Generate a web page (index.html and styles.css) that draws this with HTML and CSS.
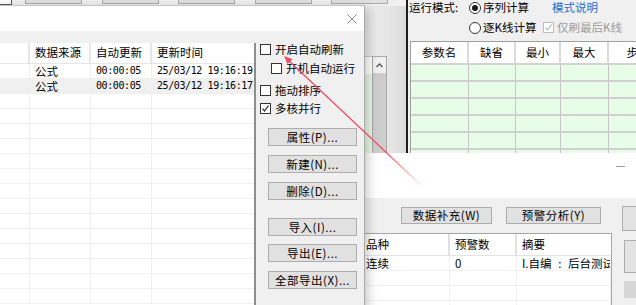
FILE: index.html
```html
<!DOCTYPE html>
<html lang="zh-CN">

<head>
    <meta charset="UTF-8">
    <meta name="viewport" content="width=device-width, initial-scale=1.0">
    <title>公式管理</title>
    <link rel="stylesheet" href="styles.css">
</head>

<body>
    <div class="desktop">

        <!-- main window toolbar, almost hidden behind the dialog -->
        <div class="win toolbar-win">
            <div class="tb-box"></div>
            <button class="tb-btn"></button>
            <button class="tb-btn"></button>
            <button class="tb-btn"></button>
            <button class="tb-btn"></button>
            <button class="tb-btn"></button>
        </div>

        <!-- splitter strip with list + scrollbar -->
        <div class="win side-win">
            <div class="side-grid"></div>
            <div class="vscroll">
                <div class="vscroll-up">
                    <svg width="7" height="5" viewBox="0 0 7 5"><polyline points="0.5,4 3.5,1 6.5,4" fill="none" stroke="#555" stroke-width="1.3"/></svg>
                </div>
            </div>
        </div>

        <!-- run mode window -->
        <div class="win run-win">
            <div class="run-row">
                <span class="run-label">运行模式:</span>
                <label class="radio-opt"><span class="radio on"></span>序列计算</label>
                <a class="link">模式说明</a>
            </div>
            <div class="run-row run-row2">
                <label class="radio-opt"><span class="radio"></span>逐K线计算</label>
                <label class="check-opt disabled">
                    <span class="check"><svg viewBox="0 0 9 9"><polyline points="1.5,4.5 3.5,7 7.5,1.5"/></svg></span>仅刷最后K线
                </label>
            </div>
            <div class="param-table">
                <div class="pt-head"><span>参数名</span><span>缺省</span><span>最小</span><span>最大</span><span>步长</span></div>
                <div class="pt-row"><span></span><span></span><span></span><span></span><span></span></div>
                <div class="pt-row"><span></span><span></span><span></span><span></span><span></span></div>
                <div class="pt-row"><span></span><span></span><span></span><span></span><span></span></div>
                <div class="pt-row"><span></span><span></span><span></span><span></span><span></span></div>
                <div class="pt-row"><span></span><span></span><span></span><span></span><span></span></div>
                <div class="pt-row"><span></span><span></span><span></span><span></span><span></span></div>
            </div>
        </div>

        <!-- warning window -->
        <div class="win warn-win">
            <div class="warn-title"><span class="min-btn"></span></div>
            <div class="warn-body">
                <div class="warn-main">
                    <div class="warn-tools">
                        <button class="btn btn-fill">数据补充(W)</button>
                        <button class="btn btn-warn">预警分析(Y)</button>
                    </div>
                    <div class="warn-table">
                        <div class="wt-head"><span></span><span>品种</span><span>预警数</span><span>摘要</span></div>
                        <div class="wt-row"><span></span><span>连续</span><span>0</span><span class="summary">I.自编 : 后台测试</span></div>
                        <div class="wt-row"><span></span><span></span><span></span><span></span></div>
                        <div class="wt-row"><span></span><span></span><span></span><span></span></div>
                        <div class="wt-row"><span></span><span></span><span></span><span></span></div>
                    </div>
                </div>
                <div class="warn-side">
                    <div class="ws-btn ws-1"></div>
                    <div class="ws-btn ws-2"></div>
                    <div class="ws-btn ws-3"></div>
                </div>
            </div>
        </div>

        <!-- formula dialog -->
        <div class="win dialog">
            <div class="dlg-title">
                <svg class="close" width="10" height="10" viewBox="0 0 10 10"><path d="M0.5 0.5L9.5 9.5M9.5 0.5L0.5 9.5" stroke="#8a8a8a" stroke-width="1"/></svg>
            </div>
            <div class="dlg-body">
                <div class="listview">
                    <div class="lv-row lv-head"><span></span><span>数据来源</span><span>自动更新</span><span>更新时间</span></div>
                    <div class="lv-row"><span></span><span>公式</span><span class="num">00:00:05</span><span class="num">25/03/12 19:16:19</span></div>
                    <div class="lv-row selected"><span></span><span>公式</span><span class="num">00:00:05</span><span class="num">25/03/12 19:16:17</span></div>
                    <div class="lv-row"><span></span><span></span><span></span><span></span></div>
                    <div class="lv-row"><span></span><span></span><span></span><span></span></div>
                    <div class="lv-row"><span></span><span></span><span></span><span></span></div>
                    <div class="lv-row"><span></span><span></span><span></span><span></span></div>
                    <div class="lv-row"><span></span><span></span><span></span><span></span></div>
                    <div class="lv-row"><span></span><span></span><span></span><span></span></div>
                    <div class="lv-row"><span></span><span></span><span></span><span></span></div>
                    <div class="lv-row"><span></span><span></span><span></span><span></span></div>
                    <div class="lv-row"><span></span><span></span><span></span><span></span></div>
                    <div class="lv-row"><span></span><span></span><span></span><span></span></div>
                    <div class="lv-row"><span></span><span></span><span></span><span></span></div>
                    <div class="lv-row"><span></span><span></span><span></span><span></span></div>
                    <div class="lv-row"><span></span><span></span><span></span><span></span></div>
                    <div class="lv-row"><span></span><span></span><span></span><span></span></div>
                </div>

                <div class="dlg-side">
                    <label class="cb-row"><span class="check"></span>开启自动刷新</label>
                    <label class="cb-row cb-sub"><span class="check"></span>开机自动运行</label>
                    <label class="cb-row cb-sort"><span class="check"></span>拖动排序</label>
                    <label class="cb-row cb-multi">
                        <span class="check"><svg viewBox="0 0 9 9"><polyline points="1.5,4.5 3.5,7 7.5,1.5"/></svg></span>多核并行
                    </label>
                    <button class="btn dlg-btn first">属性(P)...</button>
                    <button class="btn dlg-btn">新建(N)...</button>
                    <button class="btn dlg-btn">删除(D)...</button>
                    <button class="btn dlg-btn group">导入(I)...</button>
                    <button class="btn dlg-btn tight">导出(E)...</button>
                    <button class="btn dlg-btn">全部导出(X)...</button>
                </div>
            </div>
        </div>

        <!-- red annotation arrow -->
        <svg class="arrow" width="636" height="305" viewBox="0 0 636 305">
            <defs>
                <linearGradient id="fade" gradientUnits="userSpaceOnUse" x1="287" y1="59" x2="424" y2="188">
                    <stop offset="0" stop-color="#ef4a62" stop-opacity="1"/>
                    <stop offset="0.72" stop-color="#ef4a62" stop-opacity="0.95"/>
                    <stop offset="1" stop-color="#ef4a62" stop-opacity="0"/>
                </linearGradient>
            </defs>
            <line x1="288" y1="60" x2="424" y2="188" stroke="url(#fade)" stroke-width="1.4"/>
            <polygon points="284,56 287.5,64 292.5,59.3" fill="#ef4a62"/>
        </svg>
    </div>
</body>

</html>
```

FILE: styles.css
```css
body {
    margin: 0;
    font-family: "Noto Sans CJK SC", "Noto Sans", sans-serif;
    font-size: 11.5px;
    color: #000;
}

.desktop {
    position: relative;
    width: 636px;
    height: 305px;
    overflow: hidden;
    background: #f0f0f0;
}

.win {
    position: absolute;
    box-sizing: border-box;
}

.btn {
    font: inherit;
    color: #000;
    background: #e1e1e1;
    border: 1px solid #adadad;
    padding: 0;
    box-sizing: border-box;
}

/* toolbar */
.toolbar-win {
    left: 0;
    top: -16px;
    width: 406px;
    height: 22px;
    display: flex;
    align-items: flex-end;
    gap: 19.5px;
    padding-bottom: 2px;
    background: #f0f0f0;
}

.tb-box {
    width: 12px;
    height: 17px;
    margin-bottom: -1px;
    margin-right: -6.5px;
    background: #fff;
    border-right: 1px solid #5a5a5a;
    border-bottom: 1px solid #5a5a5a;
    box-sizing: border-box;
}

.tb-btn {
    width: 57px;
    height: 20px;
    background: #e1e1e1;
    border: 1px solid #adadad;
    padding: 0;
}

/* side strip */
.side-win {
    left: 340px;
    top: 6px;
    width: 66px;
    height: 147px;
    padding: 50px 19px 0 0;
    display: flex;
    background: linear-gradient(to right, #ededed, #e6e6e6 75%, #dadada);
}

.side-grid {
    flex: 1;
    background: linear-gradient(#fff 0 17px, #e7f7e7 17px);
    border-top: 1px solid #c9c9c9;
}

.vscroll {
    width: 15px;
    background: #cdcdcd;
    border: 1px solid #a9a9a9;
    border-bottom: none;
    box-sizing: border-box;
}

.vscroll-up {
    height: 16px;
    background: #f0f0f0;
    display: flex;
    align-items: center;
    justify-content: center;
}

/* run mode window */
.run-win {
    left: 406px;
    top: 0;
    width: 240px;
    height: 153px;
    padding: 1px 0 0 1px;
    border-left: 2px solid #1c1c1c;
    background: #f0f0f0;
}

.run-row {
    display: flex;
    align-items: center;
    height: 13px;
    line-height: 13px;
}

.run-row2 {
    margin-top: 7px;
    padding-left: 60px;
}

.run-label {
    width: 60px;
}

.radio-opt {
    display: flex;
    align-items: center;
    width: 74px;
}

.radio {
    width: 12px;
    height: 12px;
    margin-right: 2px;
    border: 1px solid #333;
    border-radius: 50%;
    background: #fff;
    box-sizing: border-box;
    display: flex;
    align-items: center;
    justify-content: center;
}

.radio.on::after {
    content: "";
    width: 6px;
    height: 6px;
    border-radius: 50%;
    background: #1a1a1a;
}

.link {
    margin-left: 9px;
    color: #1c6fcf;
}

.check-opt {
    display: flex;
    align-items: center;
}

.check {
    width: 11px;
    height: 11px;
    border: 1px solid #333;
    background: #fff;
    box-sizing: border-box;
    margin-right: 3px;
    display: flex;
}

.check svg {
    width: 9px;
    height: 9px;
    fill: none;
    stroke: #222;
    stroke-width: 1.2;
}

.check-opt.disabled {
    color: #9c9c9c;
}

.check-opt.disabled .check {
    border-color: #bcbcbc;
}

.check-opt.disabled .check svg {
    stroke: #b4b4b4;
}

.param-table {
    margin: 7px 0 0 1px;
    border-top: 1px solid #a0a0a0;
    border-left: 1px solid #a0a0a0;
}

.pt-head,
.pt-row {
    display: grid;
    grid-template-columns: 58px 47px 45px 48px 60px;
}

.pt-head span {
    height: 23px;
    line-height: 21px;
    text-align: center;
    background: #fff;
    border-right: 2px solid #dadada;
    border-bottom: 2px solid #d2d2d2;
    box-sizing: border-box;
}

.pt-row span {
    height: 17px;
    background: #e8fde8;
    border-right: 1px solid #c6c6c6;
    border-bottom: 2px solid #d0d0d0;
    box-sizing: border-box;
}

/* warning window */
.warn-win {
    left: 330px;
    top: 153px;
    width: 320px;
    height: 160px;
    background: #f0f0f0;
}

.warn-title {
    height: 45px;
    background: #fff;
    display: flex;
    justify-content: flex-end;
    padding: 13px 25px 0 0;
    box-sizing: border-box;
}

.min-btn {
    width: 9px;
    height: 1px;
    background: #9a9a9a;
}

.warn-body {
    display: flex;
    padding-top: 8px;
}

.warn-main {
    width: 282px;
}

.warn-tools {
    display: flex;
    justify-content: flex-end;
    gap: 14px;
    padding-right: 11px;
    margin-top: 1px;
}

.warn-tools .btn {
    height: 17px;
    line-height: 15px;
    letter-spacing: 0.5px;
}

.btn-fill {
    width: 91px;
}

.btn-warn {
    width: 95px;
}

.warn-table {
    margin-top: 9px;
    width: 281px;
    height: 80px;
    background: #fff;
    border-top: 1px solid #a5a5a5;
    border-right: 1px solid #a5a5a5;
}

.wt-head,
.wt-row {
    display: grid;
    grid-template-columns: 31px 89px 67px 94px;
}

.wt-head span {
    height: 22px;
    line-height: 21px;
    padding-left: 5px;
    border-right: 2px solid #e0e0e0;
    border-bottom: 1px solid #e3e3e3;
    box-sizing: border-box;
}

.wt-head span:last-child {
    border-right: none;
}

.wt-row span {
    height: 15px;
    line-height: 14px;
    padding-left: 5px;
    border-right: 1px solid #f0f0f0;
    border-bottom: 1px solid #f0f0f0;
    box-sizing: border-box;
    white-space: nowrap;
    overflow: hidden;
}

.wt-row .summary {
    word-spacing: 4px;
}

.warn-side {
    margin-left: 10px;
}

.ws-btn {
    background: #e3e3e3;
    border: 1px solid #adadad;
    box-sizing: border-box;
    width: 30px;
}

.ws-1 {
    height: 25px;
}

.ws-2 {
    margin: 9px 0 0 2px;
    height: 33px;
}

.ws-3 {
    margin: 8px 0 0 2px;
    height: 17px;
    background: #d6d6d6;
    border: none;
}

/* dialog */
.dialog {
    left: -12px;
    top: 5px;
    width: 377px;
    height: 320px;
    background: #f0f0f0;
    border-top: 1px solid #c4c4c4;
    border-right: 1px solid #a9a9a9;
    box-shadow: 3px 3px 10px rgba(0, 0, 0, 0.22);
}

.dlg-title {
    height: 25px;
    background: #fff;
    display: flex;
    justify-content: flex-end;
    align-items: center;
    padding-right: 7px;
}

.dlg-body {
    display: flex;
    padding-top: 12px;
}

.listview {
    width: 268px;
    height: 270px;
    background: #fff;
    border-right: 2px solid #8d8d8d;
    box-sizing: border-box;
}

.lv-row {
    display: grid;
    grid-template-columns: 42px 61px 61px 102px;
}

.lv-row span {
    height: 15px;
    line-height: 14px;
    padding-left: 5px;
    border-right: 1px solid #efefef;
    border-bottom: 1px solid #efefef;
    box-sizing: border-box;
    white-space: nowrap;
    overflow: hidden;
}

.lv-row span:last-child {
    border-right: none;
}

.lv-head span {
    height: 21px;
    line-height: 19px;
    border-right: 2px solid #e6e6e6;
    border-bottom: 1px solid #e6e6e6;
}

.lv-row.selected span {
    background: #f0f0f0;
}

.num {
    font-family: "DejaVu Sans Mono", "Liberation Mono", monospace;
    font-size: 10px;
    letter-spacing: -0.4px;
}

.dlg-side {
    width: 108px;
    padding-left: 4px;
}

.cb-row {
    display: flex;
    align-items: center;
    height: 13px;
    line-height: 13px;
}

.cb-row .check {
    margin-right: 4px;
}

.cb-sub {
    margin-top: 6px;
    padding-left: 11px;
}

.cb-sort {
    margin-top: 9px;
}

.cb-multi {
    margin-top: 5px;
}

.dlg-btn {
    display: block;
    width: 89px;
    height: 18px;
    line-height: 16px;
    margin: 9px 0 0 8px;
    letter-spacing: 0.5px;
}

.dlg-btn.first {
    margin-top: 13px;
}

.dlg-btn.group {
    margin-top: 18px;
}

.dlg-btn.tight {
    margin-top: 8px;
}

.arrow {
    position: absolute;
    left: 0;
    top: 0;
    pointer-events: none;
}
```
